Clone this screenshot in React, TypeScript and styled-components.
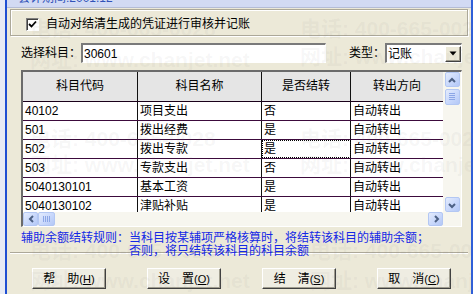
import React from 'react'
import styled, { createGlobalStyle } from 'styled-components'

const GlobalStyle = createGlobalStyle`
    html, body {
        margin: 0;
        padding: 0;
    }
    body {
        font-family: "Liberation Sans", "Noto Sans CJK SC", sans-serif;
        font-size: 12px;
        color: #000;
    }
`

type Row = {
    code: string
    name: string
    carry: string
    dir: string
}

const rows: Row[] = [
    { code: '40102', name: '项目支出', carry: '否', dir: '自动转出' },
    { code: '501', name: '拨出经费', carry: '是', dir: '自动转出' },
    { code: '502', name: '拨出专款', carry: '是', dir: '自动转出' },
    { code: '503', name: '专款支出', carry: '否', dir: '自动转出' },
    { code: '5040130101', name: '基本工资', carry: '是', dir: '自动转出' },
    { code: '5040130102', name: '津贴补贴', carry: '是', dir: '自动转出' },
]

const colWidths = [115, 124, 89, 92]
const headers = ['科目代码', '科目名称', '是否结转', '转出方向']

const Screen = styled.div`
    position: relative;
    width: 473px;
    height: 294px;
    overflow: hidden;
    box-sizing: border-box;
    padding-left: 5px;
    background: #e7ebf5;
    display: flex;
`

const Window = styled.div`
    flex: 1;
    display: flex;
    flex-direction: column;
    border-left: 2px solid #1f4fd2;
    border-right: 2px solid #2f5fd8;
    background: #ece9d8;
`

const TitleBand = styled.div`
    height: 7px;
    overflow: hidden;
    background: #d2daf3;
    border-bottom: 1px solid #b4bcd6;
    padding-left: 11px;
`

const TitleText = styled.div`
    margin-top: -8px;
    line-height: 13px;
    color: #3152b8;
    font-size: 12px;
`

const GroupBox = styled.div`
    margin: 1px 3px 0 3px;
    height: 27px;
    box-sizing: border-box;
    border: 1px solid #aca899;
    box-shadow: inset 1px 1px 0 #fff, 1px 1px 0 #fff;
    display: flex;
    align-items: center;
    padding: 3px 0 0 15px;
    gap: 7px;
`

const CheckBox = styled.div`
    width: 11px;
    height: 11px;
    background: #fff;
    border-style: solid;
    border-width: 1px;
    border-color: #808080 #fff #fff #808080;
    box-shadow: inset 1px 1px 0 #404040;
    display: flex;
    align-items: center;
    justify-content: center;
`

const Label = styled.span`
    line-height: 14px;
    white-space: nowrap;
`

const FilterRow = styled.div`
    margin: 7px 9px 0 14px;
    height: 20px;
    display: flex;
    align-items: center;
`

const TextField = styled.div<{ $w: number }>`
    width: ${(p) => p.$w}px;
    height: 20px;
    box-sizing: border-box;
    background: #fff;
    border-style: solid;
    border-width: 2px 1px 1px 2px;
    border-color: #7a7a7a #fff #fff #7a7a7a;
    display: flex;
    align-items: center;
    padding-left: 1px;
    line-height: 14px;
`

const Spacer = styled.div`
    flex: 1;
`

const ComboArrow = styled.div`
    margin-left: auto;
    width: 16px;
    height: 16px;
    box-sizing: border-box;
    background: #ece9d8;
    border-style: solid;
    border-width: 1px;
    border-color: #fff #404040 #404040 #fff;
    box-shadow: inset -1px -1px 0 #9d9a8c;
    display: flex;
    align-items: center;
    justify-content: center;
`

const Grid = styled.div`
    margin: 7px 9px 0 14px;
    height: 157px;
    box-sizing: border-box;
    border-style: solid;
    border-width: 2px 1px 1px 2px;
    border-color: #6b6b6b #fff #fff #6b6b6b;
    display: flex;
    background: #f7f6ef;
`

const GridMain = styled.div`
    width: 420px;
    display: flex;
    flex-direction: column;
`

const HeaderRow = styled.div`
    display: flex;
    height: 30px;
    box-sizing: border-box;
    border-bottom: 1px solid #1a001a;
    background: #e5e5e5;
`

const BodyArea = styled.div`
    height: 111px;
    overflow: hidden;
    background: #fff;
`

const DataRow = styled.div`
    display: flex;
    height: 19px;
    box-sizing: border-box;
    border-bottom: 1px solid #3c0a3c;
`

const Cell = styled.div<{ $w: number; $last?: boolean; $head?: boolean; $focus?: boolean }>`
    width: ${(p) => p.$w}px;
    flex-shrink: 0;
    box-sizing: border-box;
    border-right: ${(p) => (p.$last ? 'none' : '1px solid #111')};
    display: flex;
    align-items: center;
    justify-content: ${(p) => (p.$head ? 'center' : 'flex-start')};
    padding-left: ${(p) => (p.$head ? 0 : 2)}px;
    line-height: 14px;
    white-space: nowrap;
    outline: ${(p) => (p.$focus ? '1px dotted #000' : 'none')};
    outline-offset: -1px;
`

const HBar = styled.div`
    height: 14px;
    display: flex;
    align-items: stretch;
    background: #f7f6ef;
`

const VBar = styled.div`
    width: 18px;
    display: flex;
    flex-direction: column;
    align-items: center;
    background: #f7f6ef;
`

const ScrollBtn = styled.div<{ $w: number; $h: number; $gap?: number }>`
    width: ${(p) => p.$w}px;
    height: ${(p) => p.$h}px;
    margin-top: ${(p) => p.$gap || 0}px;
    flex-shrink: 0;
    box-sizing: border-box;
    border: 1px solid #b3c7f3;
    border-radius: 2px;
    background: linear-gradient(135deg, #e3ebfd 0%, #c6d6fb 60%, #b4c8f6 100%);
    display: flex;
    align-items: center;
    justify-content: center;
`

const VGap = styled.div`
    flex: 1;
`

const Corner = styled.div`
    height: 14px;
    width: 100%;
`

const Note = styled.div`
    margin: 5px 0 0 14px;
    color: #1428e6;
    line-height: 13px;
    position: relative;
    z-index: 1;
`

const NoteLine = styled.div<{ $indent?: number }>`
    padding-left: ${(p) => p.$indent || 0}px;
    white-space: nowrap;
`

const Separator = styled.div`
    margin: -6px 3px 0 3px;
    height: 0;
    border-top: 1px solid #aca899;
    border-bottom: 1px solid #fff;
`

const ButtonRow = styled.div`
    margin: 14px 0 0 25px;
    display: flex;
    gap: 41px;
`

const Button = styled.div`
    width: 74px;
    height: 21px;
    box-sizing: border-box;
    background: #efede2;
    border-style: solid;
    border-width: 1px;
    border-color: #fff #404040 #404040 #fff;
    box-shadow: inset -1px -1px 0 #a09d8f;
    display: flex;
    align-items: center;
    justify-content: center;
    line-height: 14px;
    white-space: nowrap;
    padding-top: 1px;
`

const Wide = styled.span`
    margin-right: 12px;
`

const Key = styled.span`
    font-size: 11px;
`

const Mark = styled.div<{ $x: number; $y: number }>`
    position: absolute;
    left: ${(p) => p.$x}px;
    top: ${(p) => p.$y}px;
    font-family: "Liberation Sans", "Noto Sans CJK SC", sans-serif;
    font-weight: bold;
    font-size: 21px;
    line-height: 24px;
    color: rgba(130, 130, 130, 0.07);
    white-space: nowrap;
    pointer-events: none;
    z-index: 5;
`

const ChevronIcon = ({ dir }: { dir: 'up' | 'down' | 'left' | 'right' }) => {
    const pts = {
        up: '3,8 6,5 9,8',
        down: '3,5 6,8 9,5',
        left: '8,3 5,6 8,9',
        right: '5,3 8,6 5,9',
    }[dir]
    return (
        <svg width="12" height="12" viewBox="0 0 12 12">
            <polyline points={pts} fill="none" stroke="#4d6185" strokeWidth="2" />
        </svg>
    )
}

const Grip = ({ vertical }: { vertical: boolean }) => (
    <svg width="8" height="8" viewBox="0 0 8 8">
        {[1, 3, 5, 7].map((v) =>
            vertical ? (
                <line key={v} x1="1" x2="7" y1={v - 0.5} y2={v - 0.5} stroke="#8ca6e6" strokeWidth="1" />
            ) : (
                <line key={v} y1="1" y2="7" x1={v - 0.5} x2={v - 0.5} stroke="#8ca6e6" strokeWidth="1" />
            )
        )}
    </svg>
)

const marks = [
    { x: 30, y: 17, t: '电话: 400-665-0028' },
    { x: 300, y: 17, t: '电话: 400-665-0028' },
    { x: 30, y: 48, t: '网址: www.chanjet.net' },
    { x: 300, y: 45, t: '网址: www.chanjet.net' },
    { x: 30, y: 127, t: '电话: 400-665-0028' },
    { x: 300, y: 127, t: '电话: 400-665-0028' },
    { x: 30, y: 153, t: '网址: www.chanjet.net' },
    { x: 300, y: 153, t: '网址: www.chanjet.net' },
    { x: 30, y: 239, t: '电话: 400-665-0028' },
    { x: 310, y: 239, t: '电话: 400-665-0028' },
    { x: 30, y: 269, t: '网址: www.chanjet.net' },
    { x: 310, y: 269, t: '网址: www.chanjet.net' },
]

const App = () => {
    return (
        <Screen>
            <GlobalStyle />
            <Window>
                <TitleBand>
                    <TitleText>会计期间:2001.12</TitleText>
                </TitleBand>
                <GroupBox>
                    <CheckBox>
                        <svg width="9" height="9" viewBox="0 0 9 9">
                            <polyline points="1,4 3.5,6.5 8,1.5" fill="none" stroke="#000" strokeWidth="1.8" />
                        </svg>
                    </CheckBox>
                    <Label>自动对结清生成的凭证进行审核并记账</Label>
                </GroupBox>
                <FilterRow>
                    <Label>选择科目：</Label>
                    <TextField $w={245}>30601</TextField>
                    <Spacer />
                    <Label>类型：</Label>
                    <TextField $w={77}>
                        记账
                        <ComboArrow>
                            <svg width="8" height="5" viewBox="0 0 8 5">
                                <polygon points="0.5,0.5 7.5,0.5 4,4.5" fill="#000" />
                            </svg>
                        </ComboArrow>
                    </TextField>
                </FilterRow>
                <Grid>
                    <GridMain>
                        <HeaderRow>
                            {headers.map((h, i) => (
                                <Cell key={h} $w={colWidths[i]} $head $last={i === 3}>
                                    {h}
                                </Cell>
                            ))}
                        </HeaderRow>
                        <BodyArea>
                            {rows.map((r, ri) => (
                                <DataRow key={r.code}>
                                    <Cell $w={colWidths[0]}>{r.code}</Cell>
                                    <Cell $w={colWidths[1]}>{r.name}</Cell>
                                    <Cell $w={colWidths[2]} $focus={ri === 2}>
                                        {r.carry}
                                    </Cell>
                                    <Cell $w={colWidths[3]} $last>
                                        {r.dir}
                                    </Cell>
                                </DataRow>
                            ))}
                        </BodyArea>
                        <HBar>
                            <ScrollBtn $w={15} $h={14}>
                                <ChevronIcon dir="left" />
                            </ScrollBtn>
                            <ScrollBtn $w={17} $h={14}>
                                <Grip vertical={false} />
                            </ScrollBtn>
                            <Spacer />
                            <ScrollBtn $w={15} $h={14}>
                                <ChevronIcon dir="right" />
                            </ScrollBtn>
                        </HBar>
                    </GridMain>
                    <VBar>
                        <ScrollBtn $w={15} $h={15}>
                            <ChevronIcon dir="up" />
                        </ScrollBtn>
                        <ScrollBtn $w={15} $h={16} $gap={2}>
                            <Grip vertical />
                        </ScrollBtn>
                        <VGap />
                        <ScrollBtn $w={15} $h={15}>
                            <ChevronIcon dir="down" />
                        </ScrollBtn>
                        <Corner />
                    </VBar>
                </Grid>
                <Note>
                    <NoteLine>辅助余额结转规则：当科目按某辅项严格核算时，将结转该科目的辅助余额；</NoteLine>
                    <NoteLine $indent={108}>否则，将只结转该科目的科目余额</NoteLine>
                </Note>
                <Separator />
                <ButtonRow>
                    <Button>
                        <Wide>帮</Wide>助<Key>(<u>H</u>)</Key>
                    </Button>
                    <Button>
                        <Wide>设</Wide>置<Key>(<u>O</u>)</Key>
                    </Button>
                    <Button>
                        <Wide>结</Wide>清<Key>(<u>S</u>)</Key>
                    </Button>
                    <Button>
                        <Wide>取</Wide>消<Key>(<u>C</u>)</Key>
                    </Button>
                </ButtonRow>
            </Window>
            {marks.map((m, i) => (
                <Mark key={i} $x={m.x} $y={m.y}>
                    {m.t}
                </Mark>
            ))}
        </Screen>
    )
}

export default App
